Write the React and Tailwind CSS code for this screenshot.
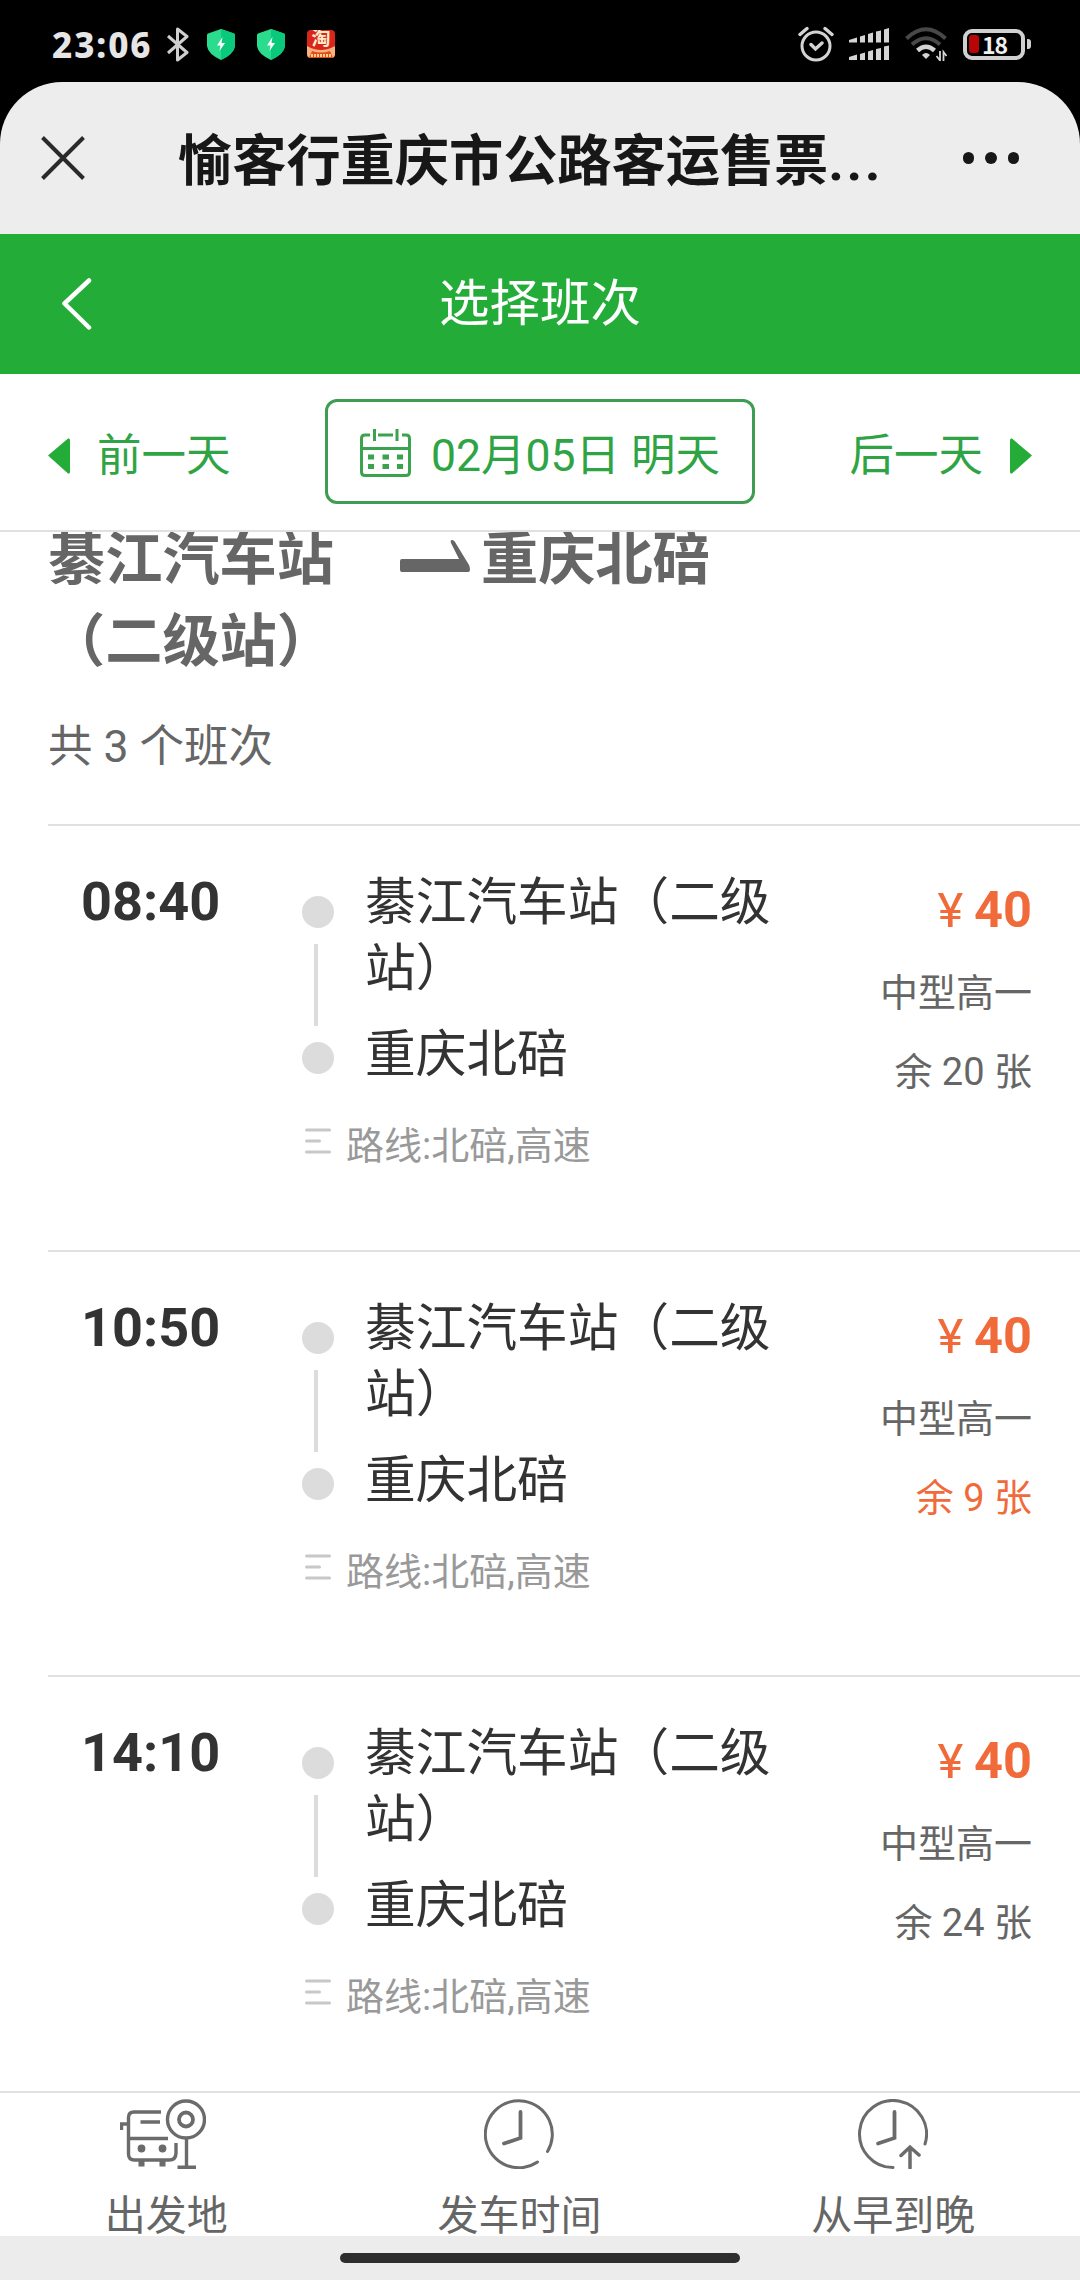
import { Fragment } from 'react';

const trips = [
  { id: 1, time: '08:40', from: '綦江汽车站（二级站）', to: '重庆北碚', route: '北碚,高速', price: 40, type: '中型高一', left: 20 },
  { id: 2, time: '10:50', from: '綦江汽车站（二级站）', to: '重庆北碚', route: '北碚,高速', price: 40, type: '中型高一', left: 9 },
  { id: 3, time: '14:10', from: '綦江汽车站（二级站）', to: '重庆北碚', route: '北碚,高速', price: 40, type: '中型高一', left: 24 },
];

function Shield() {
  return (
    <svg className="w-7 h-[31px]" viewBox="0 0 28 31">
      <path d="M14 0 27 4.5Q28 5 28 6V17Q27 25 14 31 1 25 0 17V6Q0 5 1 4.5Z" fill="#2bdc8f" />
      <path d="M14 0 27 4.5Q28 5 28 6V17Q27 25 14 31Z" fill="#0bc97a" />
      <path d="M15.5 8 10 16.500H13.5L12.5 22 18 14H14.5Z" fill="#fff" />
    </svg>
  );
}

function Taobao() {
  return (
    <span className="relative w-7 h-7 rounded-[4px] overflow-hidden bg-[#d9261c] flex justify-center">
      <svg className="absolute left-0 bottom-0 w-7 h-3" viewBox="0 0 28 12">
        <path d="M0 0Q14 8 28 0V12H0Z" fill="#f6b27a" />
        <path d="M5 5Q14 8 23 5L26 12H2Z" fill="#e2491f" />
        <path d="M4 9.500H24" stroke="#ffd08a" strokeWidth="3" strokeDasharray="2 1" />
      </svg>
      <span className="relative text-[19px] leading-[18px] font-bold text-[#ffeccb]">淘</span>
    </span>
  );
}

function StatusBar() {
  return (
    <div className="h-[82px] pt-[6px] pl-[52px] pr-[49px] flex items-center justify-between text-[#e6e6e6]">
      <div className="flex items-center">
        <span className="w-[115px] font-['Noto_Sans'] text-[35px] leading-none font-extrabold tracking-[1.9px]">23:06</span>
        <svg className="w-[22px] h-[35px]" viewBox="0 0 22 35" fill="none" stroke="#cfcfcf" strokeWidth="3">
          <path d="M1 9 20 25.500 10.500 33V2L20 9.500 1 26" strokeLinejoin="round" />
        </svg>
        <div className="ml-[18px] flex items-center gap-[22px]">
          <Shield />
          <Shield />
          <Taobao />
        </div>
      </div>
      <div className="flex items-center">
        {/* Alarm */}
        <svg className="w-9 h-9" viewBox="0 0 36 36" fill="none" stroke="#d4d4d4" strokeWidth="3" strokeLinecap="round">
          <circle cx="18" cy="20" r="14" />
          <path d="M13 18.500 17.500 23 24 17M2 8.500 9 2.500M34 8.500 27 2.500" strokeWidth="3.400" />
        </svg>
        {/* Dual SIM signal */}
        <svg className="ml-[15px] w-10 h-8" viewBox="0 0 40 32" fill="#d4d4d4">
          <path d="M0 12 8 9.500V14.500H0ZM11 8.500 16 7V14.500H11ZM19 6 24 4.500V14.500H19ZM27 3.500 32 2.500V14.500H27ZM35 1.500 40 0V14.500H35Z" />
          <path d="M0 29 8 26.500V32H0ZM11 26 16 24.500V32H11ZM19 23.500 24 22V32H19ZM27 21 32 20V32H27ZM35 18.500 40 17.500V32H35Z" />
        </svg>
        {/* Wi-Fi */}
        <svg className="ml-4 w-[42px] h-[34px]" viewBox="0 0 42 34" fill="none" strokeWidth="4">
          <path d="M1.500 11.500Q21-7 40.500 11.500" stroke="#484848" />
          <path d="M7 17.500Q21 5 35 17.500" stroke="#484848" />
          <path d="M12.500 23.500Q21 16 29.500 23.500" stroke="#d4d4d4" strokeWidth="4.500" />
          <path d="M17 28Q21 24 25 28L21 32Z" fill="#d4d4d4" />
          <path d="M35 24V33.500L31.500 29M38.500 34V25L41.500 29" stroke="#d4d4d4" strokeWidth="1.800" />
        </svg>
        {/* Battery */}
        <div className="ml-4 flex items-center gap-[2px]">
          <div className="w-[62px] h-[31px] rounded-[9px] border-4 border-[#d0d0d0] flex items-center pl-[2px]">
            <span className="w-[10px] h-[18px] rounded-[3px] bg-[#b80505]" />
            <span className="ml-[3px] font-['Noto_Sans_CJK_SC'] text-[23px] leading-none font-bold tracking-[-1px] text-[#f0f0f0]">18</span>
          </div>
          <span className="w-1 h-[10px] rounded-r-[3px] bg-[#d0d0d0]" />
        </div>
      </div>
    </div>
  );
}

function TitleBar() {
  return (
    <div className="h-[152px] rounded-t-[62px] bg-[#ededed] pl-[41px] pr-[61px] flex items-center">
      <svg className="w-11 h-11" viewBox="0 0 44 44" stroke="#2a2a2a" strokeWidth="4">
        <path d="M1.500 1.500 42.500 42.500M42.500 1.500 1.500 42.500" />
      </svg>
      <h1 className="ml-[93px] pt-[8px] flex-1 whitespace-nowrap text-[54.200px] leading-[70px] font-bold text-[#171717]">
        愉客行重庆市公路客运售票<span className="tracking-[2.500px]">...</span>
      </h1>
      <div className="flex gap-[11px]">
        <span className="w-[11.500px] h-[11.500px] rounded-full bg-[#171717]" />
        <span className="w-[11.500px] h-[11.500px] rounded-full bg-[#171717]" />
        <span className="w-[11.500px] h-[11.500px] rounded-full bg-[#171717]" />
      </div>
    </div>
  );
}

function DateBar() {
  return (
    <div className="h-[158px] px-12 flex items-center justify-between border-b-2 border-[#e0e0e0] text-[44.500px] leading-[60px] text-[#2fa444]">
      <button className="pt-2 flex items-center">
        <svg className="w-[22px] h-9" viewBox="0 0 22 36" fill="#24ac39">
          <path d="M0 17.500 20 .5Q22 0 22 2V34Q22 36 20 35.500Z" />
        </svg>
        <span className="ml-[27px]">前一天</span>
      </button>
      <button className="w-[430px] h-[105px] mb-[2px] border-[3px] border-[#3f9c53] rounded-xl flex items-center justify-center">
        <svg className="w-[51px] h-12 mt-[3px]" viewBox="0 0 51 48" fill="none" stroke="#3aa34e" strokeWidth="3">
          <path d="M10 6H5Q1.500 6 1.500 9.500V43Q1.500 46.500 5 46.500H46Q49.500 46.500 49.500 43V9.500Q49.500 6 46 6H42M18 6H33M1.500 19.500H49.500M14.500 0V12M37 0V12" />
          <path d="M8 28H14M22.500 28H29M37 28H43M8 37.500H14M22.500 37.500H29M37 37.500H43" strokeWidth="5" />
        </svg>
        <span className="pt-[10px] ml-5 whitespace-nowrap">02月05日 明天</span>
      </button>
      <button className="pt-2 flex items-center">
        <span className="mr-[27px]">后一天</span>
        <svg className="w-[22px] h-9" viewBox="0 0 22 36" fill="#24ac39">
          <path d="M22 17.500 2 .5Q0 0 0 2V34Q0 36 2 35.500Z" />
        </svg>
      </button>
    </div>
  );
}

function Trip({ trip }) {
  const few = trip.left < 10;
  return (
    <li className="h-[425.600px] shrink-0 border-t-2 border-[#e0e0e0] pt-[43px] pl-[33px] pr-12 flex">
      <div className="w-[221px] text-[54px] leading-[66px] font-bold text-[#333]">{trip.time}</div>
      <div className="w-[494px]">
        <div className="flex text-[50.700px] leading-[66px] text-[#333]">
          <div className="pt-[27px] w-8 flex flex-col items-center gap-4">
            <span className="w-8 h-8 rounded-full bg-[#dcdcdc]" />
            <span className="w-1 h-[82px] mr-1 bg-[#dcdcdc]" />
            <span className="w-8 h-8 rounded-full bg-[#dcdcdc]" />
          </div>
          <div className="pt-[1px] ml-[31px] w-[430px]">
            <p>{trip.from}</p>
            <p className="mt-5">{trip.to}</p>
          </div>
        </div>
        <div className="mt-[33px] pl-[3px] flex items-start text-[38px] leading-[50px] text-[#999]">
          <svg className="mt-[7px] w-[26px] h-[26px]" viewBox="0 0 26 26" stroke="#c8c8c8" strokeWidth="3" strokeLinecap="round">
            <path d="M1.500 2H24.500M1.500 13H14.500M1.500 24H24.500" />
          </svg>
          <span className="ml-[15px]">路线:{trip.route}</span>
        </div>
      </div>
      <div className="flex-1 text-right text-[38px] leading-[79px] text-[#666]">
        <p className="pt-[3px] mb-[2px] text-[44px] leading-[80px] text-[#f06a3a]">
          <span className="text-[49px] leading-none">¥</span> <b className="text-[50.500px] leading-none">{trip.price}</b>
        </p>
        <p>{trip.type}</p>
        <p className={few ? 'text-[#f06a3a]' : ''}>余 {trip.left} 张</p>
      </div>
    </li>
  );
}

function BusStopIcon() {
  return (
    <svg className="w-[86px] h-[70px] -ml-[6px]" viewBox="0 0 86 70" fill="none" stroke="#6b6b6b" strokeWidth="3.400">
      <path d="M41 13H14Q8.500 13 8.500 18.500V55Q8.500 61 14.500 61H49Q56 61 56 54V44M20.500 23H40M8.500 39.500H48M8.500 25H1.500V31" />
      <path d="M21.500 62V67.500M42.500 62V67.500" strokeWidth="6" />
      <circle cx="21.500" cy="49.500" r="3.900" fill="#6b6b6b" stroke="none" />
      <circle cx="42.500" cy="49.500" r="3.900" fill="#6b6b6b" stroke="none" />
      <circle cx="66" cy="20.500" r="18.500" />
      <circle cx="66" cy="20.500" r="7" strokeWidth="3.800" />
      <path d="M66.500 39V68M57.500 68.300H76" />
    </svg>
  );
}

function ClockIcon({ arrow }) {
  return (
    <svg className="w-[70px] h-[70px]" viewBox="0 0 70 70" fill="none" stroke="#6b6b6b" strokeWidth="3" strokeLinecap="round">
      {arrow ? (
        <Fragment>
          <path d="M35 68.500A33.500 33.500 0 1 1 67 45" />
          <path d="M52 69V48M43 56.500 52 48 61 56" strokeWidth="3.500" />
        </Fragment>
      ) : (
        <path d="M53.500 63A33.500 33.500 0 1 1 63.500 52.500" />
      )}
      <path d="M36.500 13V39L20 44.500" strokeWidth="3.800" />
    </svg>
  );
}

const filters = [
  { label: '出发地', icon: <BusStopIcon /> },
  { label: '发车时间', icon: <ClockIcon /> },
  { label: '从早到晚', icon: <ClockIcon arrow /> },
];

export default function App() {
  return (
    <div lang="zh-CN" className="w-[1080px] h-[2280px] overflow-hidden bg-black flex flex-col font-[Roboto,'Noto_Sans_CJK_SC',sans-serif]">
      <StatusBar />
      <TitleBar />
      <header className="h-[140px] bg-[#24ac39] grid grid-cols-[1fr_auto_1fr] items-center text-white">
        <svg className="ml-[61px] w-[31px] h-[52px]" viewBox="0 0 31 52" fill="none" stroke="#fff" strokeWidth="4.500" strokeLinecap="round" strokeLinejoin="round">
          <path d="M28 2.500 3.500 25.500 28 49.500" />
        </svg>
        <h2 className="text-[50.500px] leading-[70px]">选择班次</h2>
      </header>
      <div className="flex-1 min-h-0 bg-white flex flex-col">
        <DateBar />
        <main className="flex-1 min-h-0 overflow-hidden">
          <div className="-mt-[13px] pl-12 pb-11 text-[#666]">
            <div className="flex text-[57.200px] leading-[82px] font-bold">
              <div className="w-[350px]">綦江汽车站（二级站）</div>
              <svg className="mt-[21px] ml-[2px] w-[70px] h-8" viewBox="0 0 70 32" fill="#666">
                <path d="M0 21Q0 19 2 19H59L51 3Q50 0 52 0 54 0 55 2L69 25Q70 27 70 30 70 32 68 32H2Q0 32 0 30Z" />
              </svg>
              <div className="ml-[11px]">重庆北碚</div>
            </div>
            <p className="mt-[31px] text-[44.500px] leading-[66px]">共 3 个班次</p>
          </div>
          <ul className="ml-12">
            {trips.map((trip) => (
              <Trip key={trip.id} trip={trip} />
            ))}
          </ul>
        </main>
        <nav className="h-[145px] border-t-2 border-[#e0e0e0] pt-[6px] flex justify-around text-[#666]">
          {filters.map((f) => (
            <button key={f.label} className="flex flex-col items-center gap-[26px]">
              {f.icon}
              <span className="pt-[1px] text-[41px] leading-10">{f.label}</span>
            </button>
          ))}
        </nav>
      </div>
      <div className="h-11 bg-[#ececec] flex items-center justify-center">
        <span className="w-[400px] h-[10px] rounded-full bg-[#2e2e2e]" />
      </div>
    </div>
  );
}
